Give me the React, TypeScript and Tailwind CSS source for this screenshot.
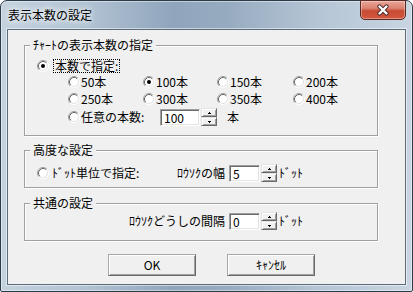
import React from "react";

function Radio({ checked }: { checked?: boolean }) {
  return (
    <svg width="12" height="12" viewBox="0 0 12 12" className="shrink-0">
      <circle cx="6" cy="6" r="4.5" fill="#fff" />
      <path d="M2.11 9.89 A5.5 5.5 0 0 1 9.89 2.11" stroke="#a0a0a0" fill="none" />
      <path d="M9.89 2.11 A5.5 5.5 0 0 1 2.11 9.89" stroke="#ffffff" fill="none" />
      <path d="M2.82 9.18 A4.5 4.5 0 0 1 9.18 2.82" stroke="#696969" fill="none" />
      <path d="M9.18 2.82 A4.5 4.5 0 0 1 2.82 9.18" stroke="#e3e3e3" fill="none" />
      {checked && <circle cx="6" cy="6" r="2" fill="#000" />}
    </svg>
  );
}

function Opt({ label, checked }: { label: string; checked?: boolean }) {
  return (
    <div className="flex items-center">
      <Radio checked={checked} />
      <span className="ml-[1px] leading-[14px]">{label}</span>
    </div>
  );
}

function Field({ value, w }: { value: string; w: string }) {
  return (
    <div
      className={`${w} h-[17px] bg-white border border-t-[#a0a0a0] border-l-[#a0a0a0] border-r-white border-b-white shadow-[inset_1px_1px_0_#696969,inset_-1px_-1px_0_#e3e3e3] pl-[3px] leading-[15px]`}
    >
      {value}
    </div>
  );
}

function SpinHalf({ up }: { up?: boolean }) {
  return (
    <div className="w-[16px] h-[9px] bg-[#f0f0f0] border border-t-[#e3e3e3] border-l-[#e3e3e3] border-r-[#696969] border-b-[#696969] shadow-[inset_1px_1px_0_#fff,inset_-1px_-1px_0_#a0a0a0] flex items-center justify-center">
      <svg width="3" height="2" viewBox="0 0 3 2" shapeRendering="crispEdges">
        {up ? (
          <>
            <rect x="1" y="0" width="1" height="1" fill="#000" />
            <rect x="0" y="1" width="3" height="1" fill="#000" />
          </>
        ) : (
          <>
            <rect x="0" y="0" width="3" height="1" fill="#000" />
            <rect x="1" y="1" width="1" height="1" fill="#000" />
          </>
        )}
      </svg>
    </div>
  );
}

function Spin() {
  return (
    <div className="ml-[1px] flex flex-col w-[16px] h-[18px]">
      <SpinHalf up />
      <SpinHalf />
    </div>
  );
}

function Btn({ children }: { children: React.ReactNode }) {
  return (
    <div className="w-[88px] h-[22px] bg-[#f0f0f0] border border-t-[#a8a8a8] border-l-[#a8a8a8] border-r-[#696969] border-b-[#696969] shadow-[inset_1px_1px_0_#fff,inset_-1px_-1px_0_#a0a0a0] flex items-center justify-center leading-[14px]">
      {children}
    </div>
  );
}

const groupCls =
  "w-[354px] border border-[#a0a0a0] shadow-[inset_1px_1px_0_#fff,1px_1px_0_#fff]";
const legendCls = "ml-[5px] px-[3px] leading-[14px] bg-[#f0f0f0]";

export default function App() {
  return (
    <div className="w-[413px] h-[292px] font-['Noto_Sans_CJK_JP','Noto_Sans',sans-serif] text-[12px] text-black">
      <div className="w-[413px] h-[292px] rounded-t-[7px] rounded-b-[2px] border border-[#2d3b49] bg-[linear-gradient(to_right,#c4d2df_0%,#b2c3d3_20%,#90a5bc_42%,#97abc0_55%,#b6c6d6_78%,#c8d5e1_100%)] shadow-[inset_0_0_0_1px_rgba(255,255,255,0.45)] flex flex-col">
        <div className="h-[28px] flex items-start justify-between">
          <div className="pl-[7px] pt-[7px] leading-[14px] [text-shadow:0_0_5px_#fff,0_0_8px_#fff]">
            表示本数の設定
          </div>
          <div className="-mt-[1px] mr-[6px] w-[46px] h-[20px] rounded-b-[5px] border border-[#5b2a22] bg-[linear-gradient(to_bottom,#e9a597_0%,#dc8373_40%,#c74a33_55%,#d4583f_100%)] shadow-[inset_0_0_0_1px_rgba(255,255,255,0.35)] flex items-center justify-center">
            <svg width="14" height="12" viewBox="0 0 14 12">
              <path d="M3.5 2.5 L10.5 9.5 M10.5 2.5 L3.5 9.5" stroke="#4a2a2a" strokeWidth="4.2" strokeLinecap="round" />
              <path d="M3.5 2.5 L10.5 9.5 M10.5 2.5 L3.5 9.5" stroke="#ffffff" strokeWidth="2.4" strokeLinecap="round" />
            </svg>
          </div>
        </div>
        <div className="mx-[6px] h-[256px] border border-[#5d6c7b] bg-[#f0f0f0] shadow-[0_0_0_1px_rgba(255,255,255,0.5)] pl-[16px]">
          <fieldset className={`mt-[8px] ${groupCls}`}>
            <legend className={legendCls}>ﾁｬｰﾄの表示本数の指定</legend>
            <div className="pt-[6px] pb-[9px] pl-[12px]">
              <div className="h-[16px] flex items-center">
                <Radio checked />
                <span className="ml-[4px] border border-dotted border-black leading-[12px] px-[1px]">
                  本数で指定:
                </span>
              </div>
              <div className="ml-[31px]">
                <div className="h-[16px] grid grid-cols-[75px_74px_76px_75px] items-center">
                  <Opt label="50本" />
                  <Opt label="100本" checked />
                  <Opt label="150本" />
                  <Opt label="200本" />
                </div>
                <div className="h-[18px] grid grid-cols-[75px_74px_76px_75px] items-center">
                  <Opt label="250本" />
                  <Opt label="300本" />
                  <Opt label="350本" />
                  <Opt label="400本" />
                </div>
                <div className="h-[18px] flex items-center">
                  <Radio />
                  <span className="ml-[1px] w-[79px] leading-[14px]">任意の本数:</span>
                  <Field value="100" w="w-[40px]" />
                  <Spin />
                  <span className="ml-[10px] leading-[14px]">本</span>
                </div>
              </div>
            </div>
          </fieldset>

          <fieldset className={`mt-[7px] ${groupCls}`}>
            <legend className={legendCls}>高度な設定</legend>
            <div className="pt-[7px] pb-[5px] pl-[12px]">
              <div className="h-[18px] flex items-center">
                <Radio />
                <span className="ml-[3px] w-[113px] leading-[14px]">ﾄﾞｯﾄ単位で指定:</span>
                <span className="w-[64px] pr-[4px] text-right leading-[14px]">ﾛｳｿｸの幅</span>
                <Field value="5" w="w-[31px]" />
                <Spin />
                <span className="ml-[2px] leading-[14px]">ﾄﾞｯﾄ</span>
              </div>
            </div>
          </fieldset>

          <fieldset className={`mt-[8px] ${groupCls}`}>
            <legend className={legendCls}>共通の設定</legend>
            <div className="pt-[2px] pb-[10px] pl-[102px]">
              <div className="h-[18px] flex items-center">
                <span className="w-[102px] pr-[4px] text-right leading-[14px]">ﾛｳｿｸどうしの間隔</span>
                <Field value="0" w="w-[31px]" />
                <Spin />
                <span className="ml-[2px] leading-[14px]">ﾄﾞｯﾄ</span>
              </div>
            </div>
          </fieldset>

          <div className="mt-[13px] flex pl-[84px] gap-[31px]">
            <Btn>OK</Btn>
            <Btn>ｷｬﾝｾﾙ</Btn>
          </div>
        </div>
      </div>
    </div>
  );
}
